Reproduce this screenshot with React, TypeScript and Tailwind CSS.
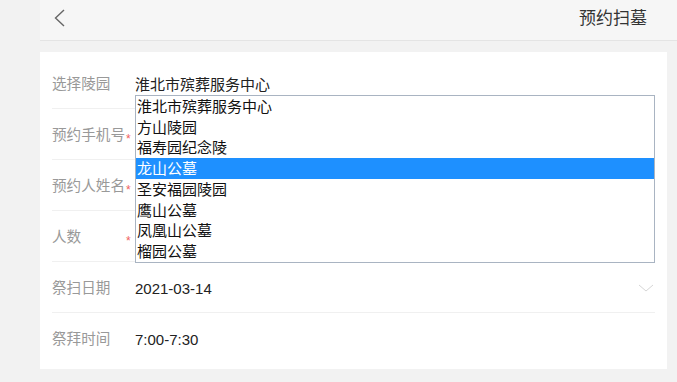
import React from "react";

const options = [
  "淮北市殡葬服务中心",
  "方山陵园",
  "福寿园纪念陵",
  "龙山公墓",
  "圣安福园陵园",
  "鹰山公墓",
  "凤凰山公墓",
  "榴园公墓",
];

function Row({
  label,
  star,
  children,
  last,
}: {
  label: string;
  star?: boolean;
  children?: React.ReactNode;
  last?: boolean;
}) {
  return (
    <div
      className={`flex items-center ${last ? "h-[51px]" : "h-[51px] border-b border-[#f0f0f0]"}`}
    >
      <div className="relative w-[83px] shrink-0 text-[14.6px] text-[#999999] leading-none pt-[2px]">
        {label}
        {star && (
          <span className="absolute left-[74px] top-1/2 text-[12px] leading-none text-[#f06060] translate-y-[-1px]">
            *
          </span>
        )}
      </div>
      <div className="flex-1 flex items-center text-[15px] text-[#222222] leading-none pt-[2px]">
        {children}
      </div>
    </div>
  );
}

export default function App() {
  return (
    <div className="w-[677px] h-[382px] bg-[#f2f2f2] font-['Liberation_Sans','Noto_Sans_CJK_SC',sans-serif] overflow-hidden">
      <div className="ml-[40px]">
        <div className="h-[41px] bg-[#f6f6f6] border-b border-[#e4e4e4] flex items-center justify-between pl-[14px] pr-[30px]">
          <svg width="12" height="18" viewBox="0 0 12 18" className="mb-[4px]">
            <path d="M10 1 L1.5 9 L10 17" fill="none" stroke="#666" strokeWidth="1.4" />
          </svg>
          <div className="text-[17px] text-[#333333] leading-none mb-[4px]">预约扫墓</div>
        </div>
        <div className="relative mt-[11px] w-[627px] bg-white pt-[6px] pb-[5px] px-[12px]">
          <Row label="选择陵园">淮北市殡葬服务中心</Row>
          <Row label="预约手机号" star />
          <Row label="预约人姓名" star />
          <Row label="人数" star />
          <Row label="祭扫日期">
            <span className="flex-1">2021-03-14</span>
            <svg width="16" height="8" viewBox="0 0 16 8" className="mr-[1px]">
              <path d="M1 1 L8 7 L15 1" fill="none" stroke="#d6d6d6" strokeWidth="1" />
            </svg>
          </Row>
          <Row label="祭拜时间" last>
            7:00-7:30
          </Row>
          <div className="absolute left-[95px] top-[43px] w-[520px] h-[168px] border border-[#a9b4c2] bg-white">
            {options.map((o, i) => (
              <div
                key={o}
                className={`h-[20.75px] flex items-center pl-[1px] text-[15px] leading-none ${
                  i === 3 ? "bg-[#1e90ff] text-white" : "text-[#111111]"
                }`}
              >
                {o}
              </div>
            ))}
          </div>
        </div>
      </div>
    </div>
  );
}
